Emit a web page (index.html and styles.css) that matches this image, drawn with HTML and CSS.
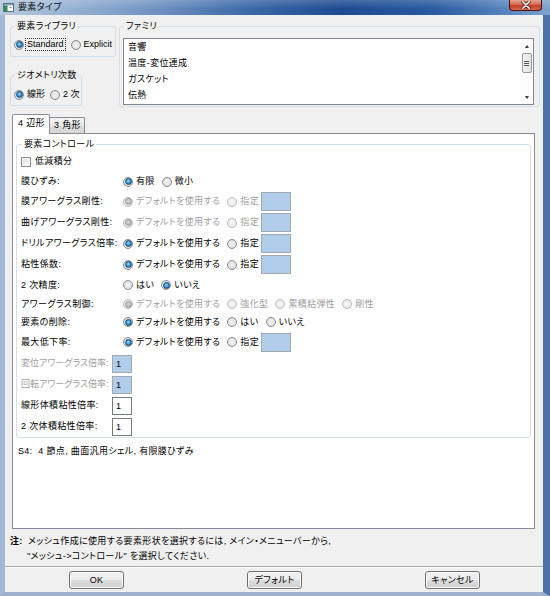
FILE: index.html
```html
<!DOCTYPE html>
<html lang="ja">
<head>
<meta charset="utf-8">
<title>要素タイプ</title>
<link rel="stylesheet" href="styles.css">
</head>
<body>
<div class="window">
  <div class="titlebar">
    <span class="app-icon">
      <svg width="11" height="9" viewBox="0 0 11 9"><rect x="0.5" y="0.5" width="10" height="8" fill="#fff" stroke="#59707f"/><rect x="1" y="1" width="9" height="1.5" fill="#8fa7b8"/><rect x="1" y="2.5" width="3.5" height="6" fill="#2e8a5c"/><rect x="6" y="4" width="3" height="1" fill="#9aa"/></svg>
    </span>
    <span class="title">要素タイプ</span>
    <span class="close">
      <svg width="10" height="8" viewBox="0 0 10 8"><path d="M1.5 0.5 L8.5 7.5 M8.5 0.5 L1.5 7.5" stroke="#3a0d0d" stroke-width="3" stroke-linecap="round"/><path d="M1.5 0.5 L8.5 7.5 M8.5 0.5 L1.5 7.5" stroke="#fff" stroke-width="1.6" stroke-linecap="round"/></svg>
    </span>
  </div>
  <div class="frame">
    <div class="client">
      <div class="top">
        <div class="left-col">
          <fieldset class="grp lib">
            <legend>要素ライブラリ</legend>
            <div class="opts">
              <span class="opt"><span class="radio on"></span><span class="focus">Standard</span></span>
              <span class="opt"><span class="radio"></span><span>Explicit</span></span>
            </div>
          </fieldset>
          <fieldset class="grp geo">
            <legend>ジオメトリ次数</legend>
            <div class="opts">
              <span class="opt"><span class="radio on"></span><span>線形</span></span>
              <span class="opt"><span class="radio"></span><span>2 次</span></span>
            </div>
          </fieldset>
        </div>
        <fieldset class="grp fam">
          <legend>ファミリ</legend>
          <div class="listbox">
            <ul class="items">
              <li>音響</li>
              <li>温度-変位連成</li>
              <li>ガスケット</li>
              <li>伝熱</li>
            </ul>
            <div class="scrollbar">
              <span class="arrow up"></span>
              <span class="thumb"><span class="grip"></span></span>
              <span class="track"></span>
              <span class="arrow down"></span>
            </div>
          </div>
        </fieldset>
      </div>

      <div class="tabs">
        <div class="tab active">4 辺形</div>
        <div class="tab">3 角形</div>
      </div>
      <div class="panel">
        <fieldset class="grp ctrl">
          <legend>要素コントロール</legend>
          <div class="row r21"><span class="check"></span><span class="ctext">低減積分</span></div>
          <div class="row r19"><span class="lbl">膜ひずみ:</span>
            <div class="ctrls"><span class="opt"><span class="radio on"></span><span>有限</span></span><span class="opt"><span class="radio"></span><span>微小</span></span></div>
          </div>
          <div class="row r21"><span class="lbl">膜アワーグラス剛性:</span>
            <div class="ctrls dis"><span class="opt"><span class="radio on"></span><span>デフォルトを使用する</span></span><span class="opt"><span class="radio"></span><span>指定</span></span><span class="field blue"></span></div>
          </div>
          <div class="row r21"><span class="lbl">曲げアワーグラス剛性:</span>
            <div class="ctrls dis"><span class="opt"><span class="radio on"></span><span>デフォルトを使用する</span></span><span class="opt"><span class="radio"></span><span>指定</span></span><span class="field blue"></span></div>
          </div>
          <div class="row r21"><span class="lbl">ドリルアワーグラス倍率:</span>
            <div class="ctrls"><span class="opt"><span class="radio on"></span><span>デフォルトを使用する</span></span><span class="opt"><span class="radio"></span><span>指定</span></span><span class="field blue"></span></div>
          </div>
          <div class="row r21"><span class="lbl">粘性係数:</span>
            <div class="ctrls"><span class="opt"><span class="radio on"></span><span>デフォルトを使用する</span></span><span class="opt"><span class="radio"></span><span>指定</span></span><span class="field blue"></span></div>
          </div>
          <div class="row r20"><span class="lbl">2 次精度:</span>
            <div class="ctrls"><span class="opt"><span class="radio"></span><span>はい</span></span><span class="opt"><span class="radio on"></span><span>いいえ</span></span></div>
          </div>
          <div class="row r18"><span class="lbl">アワーグラス制御:</span>
            <div class="ctrls dis"><span class="opt"><span class="radio on"></span><span>デフォルトを使用する</span></span><span class="opt"><span class="radio"></span><span>強化型</span></span><span class="opt"><span class="radio"></span><span>累積粘弾性</span></span><span class="opt"><span class="radio"></span><span>剛性</span></span></div>
          </div>
          <div class="row r18"><span class="lbl">要素の削除:</span>
            <div class="ctrls"><span class="opt"><span class="radio on"></span><span>デフォルトを使用する</span></span><span class="opt"><span class="radio"></span><span>はい</span></span><span class="opt"><span class="radio"></span><span>いいえ</span></span></div>
          </div>
          <div class="row r22"><span class="lbl">最大低下率:</span>
            <div class="ctrls"><span class="opt"><span class="radio on"></span><span>デフォルトを使用する</span></span><span class="opt"><span class="radio"></span><span>指定</span></span><span class="field blue"></span></div>
          </div>
          <div class="row r21"><span class="lbl dtext">変位アワーグラス倍率:</span><span class="sfield blue">1</span></div>
          <div class="row r21"><span class="lbl dtext">回転アワーグラス倍率:</span><span class="sfield blue">1</span></div>
          <div class="row r21"><span class="lbl">線形体積粘性倍率:</span><span class="sfield white">1</span></div>
          <div class="row r21"><span class="lbl">2 次体積粘性倍率:</span><span class="sfield white">1</span></div>
        </fieldset>
        <div class="summary">S4:&nbsp;&nbsp;4 節点, 曲面汎用シェル, 有限膜ひずみ</div>
      </div>

      <div class="note">
        <span class="note-key">注:</span>
        <div class="note-text">
          <div>メッシュ作成に使用する要素形状を選択するには, メイン・メニューバーから,</div>
          <div>"メッシュ-&gt;コントロール" を選択してください.</div>
        </div>
      </div>
      <div class="sep"></div>
      <div class="buttons">
        <span class="btn">OK</span>
        <span class="btn">デフォルト</span>
        <span class="btn">キャンセル</span>
      </div>
    </div>
  </div>
</div>
</body>
</html>
```

FILE: styles.css
```css
* { box-sizing: border-box; }

body {
  margin: 0;
  width: 550px;
  height: 596px;
  overflow: hidden;
  font-family: "Liberation Sans", "Noto Sans CJK JP", sans-serif;
  font-size: 9px;
  font-feature-settings: "palt";
  letter-spacing: 0.35px;
  color: #000;
  background: #8aa6c9;
}

.window {
  display: flex;
  flex-direction: column;
  height: 596px;
}

/* ---------- title bar ---------- */
.titlebar {
  height: 15px;
  flex: none;
  display: flex;
  align-items: flex-start;
  background:
    linear-gradient(180deg, rgba(255,255,255,0.18) 0%, rgba(255,255,255,0) 60%),
    linear-gradient(90deg, #b7c9df 0%, #98b3d3 12%, #6f93c2 28%, #3d68a8 45%, #1d4b91 62%, #285a9f 78%, #4f7db9 90%, #7fa3cf 100%);
}
.app-icon {
  display: flex;
  margin: 3px 0 0 3px;
  width: 11px;
  height: 9px;
}
.title {
  margin-left: 4px;
  line-height: 14px;
  color: #0a0a0a;
}
.close {
  margin-left: auto;
  margin-right: 8px;
  width: 33px;
  height: 11px;
  display: flex;
  align-items: center;
  justify-content: center;
  border: 1px solid #4d1410;
  border-top: none;
  border-radius: 0 0 4px 4px;
  background: linear-gradient(180deg, #e8a493 0%, #d26a55 45%, #c2412a 55%, #d4654a 100%);
}

/* ---------- frame ---------- */
.frame {
  flex: 1;
  display: flex;
  border-left: 5px solid #a3b8d3;
  border-right: 7px solid #4d73a6;
  border-bottom: 4px solid #9cb1cc;
}
.client {
  flex: 1;
  display: flex;
  flex-direction: column;
  background: #f0f0f0;
  padding-top: 5px;
}

/* ---------- group boxes ---------- */
fieldset.grp {
  margin: 0;
  min-width: 0;
  border: 1px solid #d5dfe5;
  border-radius: 3px;
  padding: 0 4px;
}
fieldset.grp legend {
  padding: 0 2px;
  line-height: 13px;
  margin-left: 1px;
  white-space: nowrap;
}

.top {
  display: flex;
  align-items: flex-start;
  gap: 3px;
  padding: 0 3px 0 5px;
  height: 88px;
}
.left-col {
  display: flex;
  flex-direction: column;
  width: 106px;
  flex: none;
}
fieldset.lib {
  width: 106px;
  padding: 5px 3px 5px 3px;
}
fieldset.geo {
  width: 72px;
  margin-top: 12px;
  padding: 6px 3px 4px 3px;
}
fieldset.fam {
  flex: 1;
  padding: 5px 5px 1px 3px;
}

.opts {
  display: flex;
  align-items: center;
  height: 13px;
}
.lib .opts, .geo .opts { letter-spacing: 0; }
.opt {
  display: flex;
  align-items: center;
  gap: 3px;
  margin-right: 7px;
  line-height: 13px;
  white-space: nowrap;
}
.lib .opt:first-child { gap: 1px; margin-right: 5px; }
.geo .opt { gap: 3px; margin-right: 5px; }
.focus {
  border: 1px dotted #333;
  padding: 0 1px;
  line-height: 11px;
}

/* radio / checkbox */
.radio {
  flex: none;
  width: 10px;
  height: 10px;
  border-radius: 50%;
  border: 1px solid #8b8e91;
  background: radial-gradient(circle at 50% 50%, #f3f3f3 0%, #e6e6e6 55%, #c9c9c9 100%);
  display: flex;
  align-items: center;
  justify-content: center;
}
.radio.on::after {
  content: "";
  width: 5px;
  height: 5px;
  border-radius: 50%;
  border: 0.5px solid #1a4d78;
  background: radial-gradient(circle at 45% 40%, #9be0ff 0%, #3b9ad6 45%, #195c94 100%);
}
.dis { color: #a0a0a0; }
.dis .radio {
  border-color: #bcbcbc;
  background: radial-gradient(circle at 50% 50%, #f7f7f7 0%, #ededed 60%, #dedede 100%);
}
.dis .radio.on::after {
  border-color: #9a9a9a;
  background: radial-gradient(circle at 45% 40%, #d8d8d8 0%, #a8a8a8 100%);
}
.check {
  flex: none;
  width: 10px;
  height: 10px;
  border: 1px solid #8b8e91;
  background: linear-gradient(135deg, #d9dadb 0%, #f2f2f2 60%, #fbfbfb 100%);
  box-shadow: inset 0 0 0 1px #f4f4f4;
}
.ctext { margin-left: 4px; line-height: 13px; }

/* listbox */
.listbox {
  display: flex;
  height: 67px;
  background: #fff;
  border: 1px solid #828790;
}
.items {
  flex: 1;
  list-style: none;
  margin: 0;
  padding: 0 0 0 4px;
}
.items li {
  line-height: 16px;
}
.scrollbar {
  flex: none;
  width: 11px;
  margin-right: 1px;
  display: flex;
  flex-direction: column;
  align-items: center;
  background: #fdfdfd;
}
.arrow {
  width: 0;
  height: 0;
  border-left: 2.5px solid transparent;
  border-right: 2.5px solid transparent;
}
.arrow.up {
  margin-top: 6px;
  border-bottom: 3px solid #3a3a3a;
}
.arrow.down {
  margin-bottom: 5px;
  border-top: 3px solid #3a3a3a;
}
.thumb {
  margin-top: 5px;
  width: 10px;
  height: 20px;
  border: 1px solid #959ba3;
  border-radius: 2px;
  background: linear-gradient(90deg, #f2f2f2, #e3e4e6);
  display: flex;
  align-items: center;
  justify-content: center;
}
.grip {
  width: 5px;
  height: 5px;
  background: repeating-linear-gradient(180deg, #555 0 1px, transparent 1px 2px);
}
.track { flex: 1; }

/* ---------- tabs ---------- */
.tabs {
  display: flex;
  align-items: flex-end;
  margin: 6px 0 0 7px;
  height: 19px;
}
.tab {
  height: 16px;
  width: 36px;
  margin-left: -1px;
  border: 1px solid #898c95;
  border-bottom: none;
  border-radius: 2px 2px 0 0;
  background: linear-gradient(180deg, #f4f4f4 0%, #e8e8e8 50%, #dcdcdc 51%, #d6d6d6 100%);
  padding-left: 4px;
  line-height: 14px;
}
.tab.active {
  position: relative;
  z-index: 1;
  height: 20px;
  width: 38px;
  margin-left: 0;
  margin-bottom: -1px;
  background: #fff;
  padding-left: 5px;
  line-height: 17px;
}
.panel {
  margin: 0 8px 0 7px;
  height: 396px;
  border: 1px solid #898c95;
  background: #fff;
  padding: 4px 3px 0 3px;
}
fieldset.ctrl {
  padding: 0 4px;
  height: 300px;
}
.row {
  display: flex;
  align-items: center;
  white-space: nowrap;
}
.r18 { height: 18px; }
.r19 { height: 19px; }
.r20 { height: 20px; }
.r21 { height: 21px; }
.r22 { height: 22px; }
.lbl {
  width: 91px;
  flex: none;
  line-height: 13px;
}
.dtext { color: #a0a0a0; letter-spacing: 0; }
.ctrls {
  display: flex;
  align-items: center;
  padding-left: 11px;
}
.field {
  width: 30px;
  height: 19px;
  margin-left: -5px;
}
.blue {
  background: #b0cdec;
  border: 1px solid #a3a8ae;
}
.sfield {
  width: 20px;
  height: 18px;
  padding-left: 3px;
  line-height: 16px;
}
.white {
  background: #fff;
  border: 1px solid #7a7a7a;
}
.summary {
  margin: 7px 0 0 2px;
  line-height: 13px;
}

/* ---------- note & buttons ---------- */
.note {
  display: flex;
  margin: 5px 0 0 5px;
  line-height: 15px;
}
.note-key {
  width: 18px;
  font-weight: bold;
}
.note-text div:last-child { margin-left: -1px; }
.sep {
  margin-top: 2px;
  height: 2px;
  border-top: 1px solid #a9a9a9;
  border-bottom: 1px solid #fdfdfd;
}
.buttons {
  display: flex;
  gap: 123px;
  padding-left: 64px;
  margin-top: 3px;
}
.btn {
  width: 55px;
  height: 18px;
  border: 1px solid #707070;
  border-radius: 3px;
  background: linear-gradient(180deg, #f2f2f2 0%, #ebebeb 50%, #dddddd 51%, #cfcfcf 100%);
  box-shadow: inset 0 0 0 1px #fcfcfc;
  display: flex;
  align-items: center;
  justify-content: center;
  line-height: 14px;
}
```
